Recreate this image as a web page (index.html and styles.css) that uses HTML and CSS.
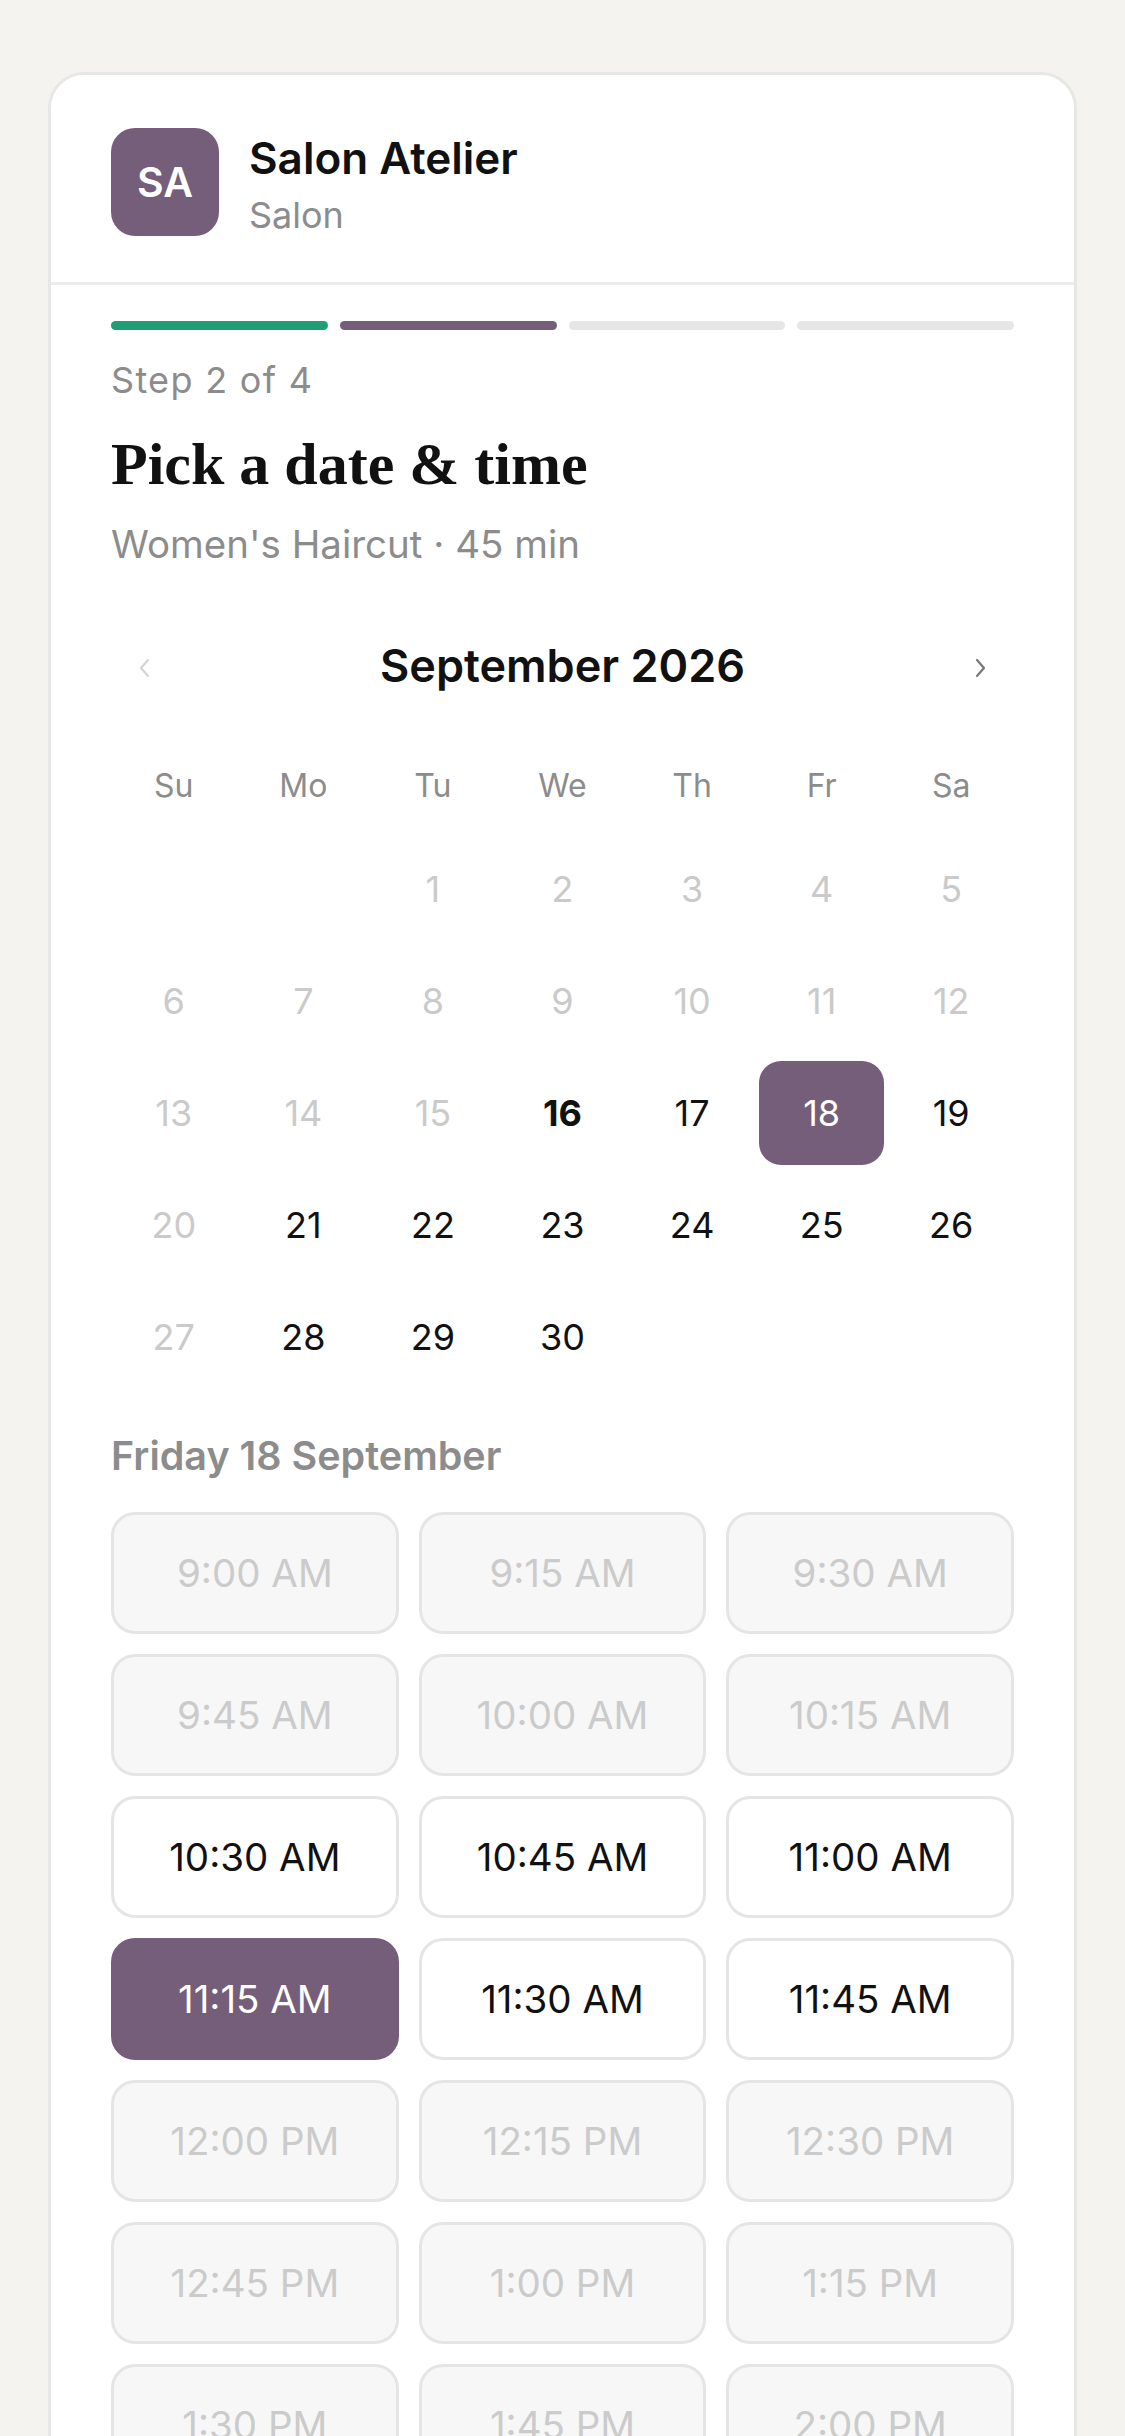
FILE: index.html
```html
<!DOCTYPE html>
<html lang="en">
<head>
  <meta charset="UTF-8">
  <meta name="viewport" content="width=device-width, initial-scale=1.0">
  <title>Book – Salon Atelier</title>
  <link rel="stylesheet" href="styles.css">
</head>
<body>
  <div class="page">
    <div class="booking-card">

      <!-- Business header -->
      <div class="biz-header">
        <div class="biz-avatar">SA</div>
        <div class="biz-info">
          <div class="biz-name">Salon Atelier</div>
          <div class="biz-type">Salon</div>
        </div>
      </div>

      <div class="card-body">
        <!-- Progress -->
        <div class="steps">
          <span class="step done"></span>
          <span class="step active"></span>
          <span class="step"></span>
          <span class="step"></span>
        </div>
        <div class="step-label">Step 2 of 4</div>
        <h1 class="title">Pick a date &amp; time</h1>
        <div class="service">Women's Haircut · 45 min</div>

        <!-- Calendar -->
        <div class="month-nav">
          <button class="nav-btn disabled" aria-label="Previous month">
            <svg width="14" height="22" viewBox="0 0 14 22"><path d="M11 3 L4 11 L11 19" fill="none" stroke="currentColor" stroke-width="2.2" stroke-linecap="round" stroke-linejoin="round"/></svg>
          </button>
          <div class="month-name">September 2026</div>
          <button class="nav-btn" aria-label="Next month">
            <svg width="14" height="22" viewBox="0 0 14 22"><path d="M3 3 L10 11 L3 19" fill="none" stroke="currentColor" stroke-width="2.2" stroke-linecap="round" stroke-linejoin="round"/></svg>
          </button>
        </div>

        <div class="weekdays">
          <span>Su</span><span>Mo</span><span>Tu</span><span>We</span><span>Th</span><span>Fr</span><span>Sa</span>
        </div>

        <div class="days">
          <span class="day empty"></span>
          <span class="day empty"></span>
          <span class="day off">1</span>
          <span class="day off">2</span>
          <span class="day off">3</span>
          <span class="day off">4</span>
          <span class="day off">5</span>

          <span class="day off">6</span>
          <span class="day off">7</span>
          <span class="day off">8</span>
          <span class="day off">9</span>
          <span class="day off">10</span>
          <span class="day off">11</span>
          <span class="day off">12</span>

          <span class="day off">13</span>
          <span class="day off">14</span>
          <span class="day off">15</span>
          <span class="day today">16</span>
          <span class="day">17</span>
          <span class="day selected">18</span>
          <span class="day">19</span>

          <span class="day off">20</span>
          <span class="day">21</span>
          <span class="day">22</span>
          <span class="day">23</span>
          <span class="day">24</span>
          <span class="day">25</span>
          <span class="day">26</span>

          <span class="day off">27</span>
          <span class="day">28</span>
          <span class="day">29</span>
          <span class="day">30</span>
        </div>

        <!-- Time slots -->
        <div class="slots-date">Friday 18 September</div>
        <div class="slots">
          <button class="slot taken">9:00 AM</button>
          <button class="slot taken">9:15 AM</button>
          <button class="slot taken">9:30 AM</button>
          <button class="slot taken">9:45 AM</button>
          <button class="slot taken">10:00 AM</button>
          <button class="slot taken">10:15 AM</button>
          <button class="slot">10:30 AM</button>
          <button class="slot">10:45 AM</button>
          <button class="slot">11:00 AM</button>
          <button class="slot picked">11:15 AM</button>
          <button class="slot">11:30 AM</button>
          <button class="slot">11:45 AM</button>
          <button class="slot taken">12:00 PM</button>
          <button class="slot taken">12:15 PM</button>
          <button class="slot taken">12:30 PM</button>
          <button class="slot taken">12:45 PM</button>
          <button class="slot taken">1:00 PM</button>
          <button class="slot taken">1:15 PM</button>
          <button class="slot taken">1:30 PM</button>
          <button class="slot taken">1:45 PM</button>
          <button class="slot taken">2:00 PM</button>
        </div>
      </div>
    </div>
  </div>
</body>
</html>
```

FILE: styles.css
```css
body {
  margin: 0;
  background-color: #f4f3f0;
  font-family: Inter, "Noto Sans", sans-serif;
  color: #111;
  height: 2436px;
  overflow: hidden;
}
.page {
  padding: 72px 48px 0;
}
.booking-card {
  background: white;
  border: 3px solid #e7e7e5;
  border-radius: 36px;
}

/* header */
.biz-header {
  display: flex;
  align-items: flex-start;
  gap: 30px;
  padding: 53px 60px 46px;
  border-bottom: 3px solid #ececec;
}
.biz-avatar {
  width: 108px;
  height: 108px;
  border-radius: 24px;
  background-color: #755e79;
  color: white;
  font-size: 41px;
  font-weight: 600;
  display: flex;
  align-items: center;
  justify-content: center;
}
.biz-info {
  padding-top: 4px;
}
.biz-name {
  font-size: 44px;
  font-weight: 600;
  line-height: 52px;
}
.biz-type {
  font-size: 36px;
  line-height: 42px;
  color: #8c8c8c;
  margin-top: 10px;
}

.card-body {
  padding: 36px 60px 60px;
}

/* progress */
.steps {
  display: flex;
  gap: 12px;
}
.step {
  flex: 1;
  height: 9px;
  border-radius: 5px;
  background-color: #e6e6e6;
}
.step.done { background-color: #1f9e75; }
.step.active { background-color: #755e79; }

.step-label {
  margin-top: 26px;
  font-size: 36px;
  line-height: 48px;
  letter-spacing: 1.3px;
  color: #8c8c8c;
}
.title {
  margin: 24px 0 0;
  font-family: "Liberation Serif", serif;
  font-size: 60px;
  line-height: 72px;
  font-weight: bold;
}
.service {
  margin-top: 20px;
  font-size: 38.5px;
  line-height: 48px;
  color: #8c8c8c;
}

/* calendar */
.month-nav {
  margin-top: 67px;
  display: flex;
  align-items: center;
  justify-content: space-between;
  height: 60px;
}
.nav-btn {
  width: 66px;
  height: 60px;
  border: none;
  background: none;
  padding: 0;
  padding-top: 6px;
  color: #777;
  display: flex;
  align-items: center;
  justify-content: center;
}
.nav-btn.disabled { color: #d4d4d4; }
.month-name {
  font-size: 45px;
  font-weight: 600;
}
.weekdays {
  margin-top: 67px;
  display: grid;
  grid-template-columns: repeat(7, 1fr);
  column-gap: 4px;
  text-align: center;
  font-size: 32px;
  line-height: 48px;
  color: #8c8c8c;
}
.days {
  margin-top: 27px;
  display: grid;
  grid-template-columns: repeat(7, 1fr);
  grid-auto-rows: 104px;
  gap: 8px 4px;
}
.day {
  display: flex;
  align-items: center;
  justify-content: center;
  font-size: 36px;
  border-radius: 22px;
}
.day.off { color: #cacaca; }
.day.today { font-weight: 700; }
.day.selected {
  background-color: #755e79;
  color: white;
}

/* slots */
.slots-date {
  margin-top: 43px;
  font-size: 39.5px;
  font-weight: 600;
  line-height: 48px;
  color: #8c8c8c;
}
.slots {
  margin-top: 32px;
  display: grid;
  grid-template-columns: repeat(3, 1fr);
  grid-auto-rows: 122px;
  gap: 20px 20px;
}
.slot {
  font-family: inherit;
  font-size: 38.5px;
  color: #111;
  background: white;
  border: 3px solid #e5e5e5;
  border-radius: 24px;
  padding: 0;
}
.slot.taken {
  background-color: #f7f7f7;
  color: #cbcbcb;
}
.slot.picked {
  background-color: #755e79;
  border-color: #755e79;
  color: white;
}
```
